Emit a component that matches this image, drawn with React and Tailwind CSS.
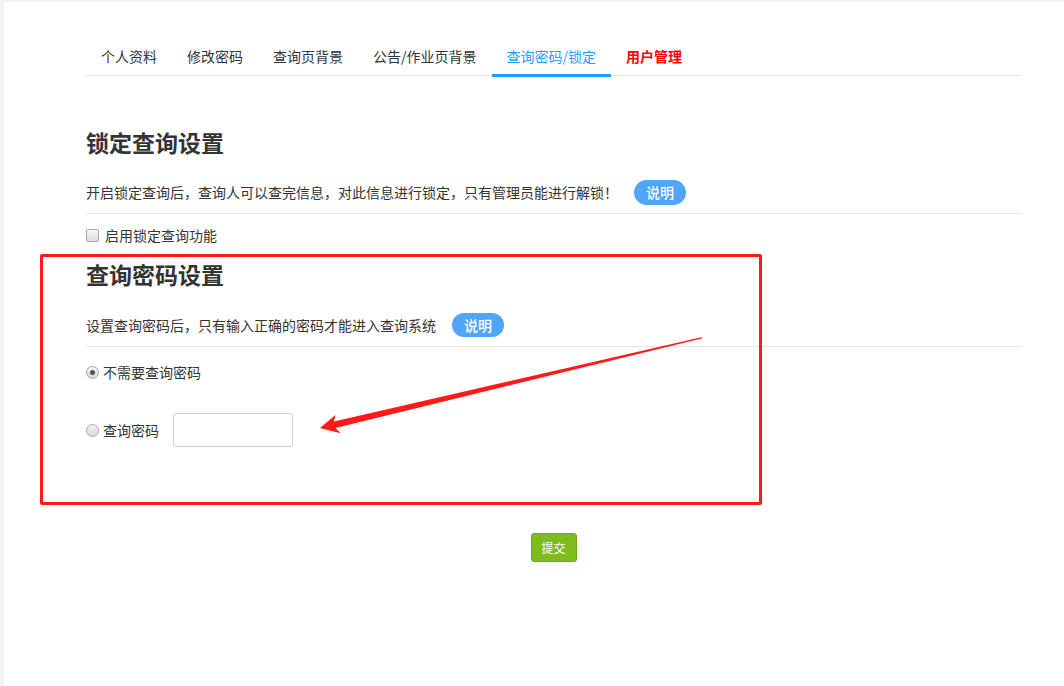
import React from "react";

const tabs = ["个人资料", "修改密码", "查询页背景", "公告/作业页背景", "查询密码/锁定", "用户管理"];

const Radio = ({ checked }) => (
  <span className="w-[13px] h-[13px] rounded-full border border-[#a8a8a8] bg-gradient-to-b from-[#f4f4f4] to-[#d9d9d9] flex items-center justify-center shrink-0">
    {checked ? <span className="w-[5px] h-[5px] rounded-full bg-[#555]" /> : null}
  </span>
);

export default function App() {
  return (
    <div className="relative w-[1064px] h-[686px] bg-[#f2f2f2] pl-[4px] pt-[2px] overflow-hidden font-['Microsoft_YaHei','Noto_Sans_CJK_SC',sans-serif] text-[#333]">
      <div className="w-full h-full bg-white px-[82px] pt-[36px]">
        <div className="w-[935px]">
          {/* tabs */}
          <div className="flex border-b border-[#e6e6e6]">
            {tabs.map((t, i) => (
              <div
                key={t}
                className={`relative px-[15px] h-[37px] leading-[37px] text-[14px] ${
                  i === 4 ? "text-[#1e9fff]" : i === 5 ? "text-[#ff0000] font-bold" : "text-[#333]"
                }`}
              >
                {t}
                {i === 4 ? <span className="absolute left-0 right-0 bottom-[-2px] h-[3px] bg-[#1e9fff]" /> : null}
              </div>
            ))}
          </div>

          {/* lock section */}
          <h2 className="mt-[51px] text-[23px] font-bold leading-[30px]">锁定查询设置</h2>
          <div className="mt-[23px] pb-[8px] flex items-center border-b border-[#e6e6e6] text-[14px]">
            <span>开启锁定查询后，查询人可以查完信息，对此信息进行锁定，只有管理员能进行解锁！</span>
            <span className="ml-[16px] w-[52px] h-[25px] rounded-full bg-[#4fa5f8] text-white text-[14px] font-medium leading-[25px] text-center">说明</span>
          </div>
          <div className="mt-[11px] h-[20px] flex items-center text-[14px]">
            <span className="w-[13px] h-[13px] rounded-[2px] border border-[#a8a8a8] bg-gradient-to-b from-[#f6f6f6] to-[#dedede] shrink-0" />
            <span className="ml-[6px]">启用锁定查询功能</span>
          </div>

          {/* password section */}
          <h2 className="mt-[14px] text-[23px] font-bold leading-[30px]">查询密码设置</h2>
          <div className="mt-[24px] pb-[9px] flex items-center border-b border-[#e6e6e6] text-[14px]">
            <span>设置查询密码后，只有输入正确的密码才能进入查询系统</span>
            <span className="ml-[16px] w-[52px] h-[24px] rounded-full bg-[#4fa5f8] text-white text-[14px] font-medium leading-[24px] text-center">说明</span>
          </div>
          <div className="mt-[15px] h-[20px] flex items-center text-[14px]">
            <Radio checked />
            <span className="ml-[4px]">不需要查询密码</span>
          </div>
          <div className="mt-[31px] flex items-center text-[14px]">
            <Radio />
            <span className="ml-[4px]">查询密码</span>
            <input className="ml-[14px] w-[120px] h-[34px] rounded-[3px] border border-[#cfcfcf] outline-none" />
          </div>

          <div className="mt-[86px] flex justify-center">
            <button className="w-[46px] h-[29px] rounded-[3px] bg-[#7cbd1c] border border-[#6eaa16] text-white text-[12px]">提交</button>
          </div>
        </div>
      </div>

      {/* annotation overlay */}
      <div className="absolute left-[40px] top-[254px] w-[722px] h-[251px] border-[3px] border-[#ff1a1a] rounded-[2px] pointer-events-none" />
      <svg className="absolute left-0 top-0 pointer-events-none" width="1064" height="686">
        <g transform="translate(320,428) rotate(-13.3)">
          <polygon points="0,0 18,-9 15,-3.2 392,-0.6 393,0.6 15,3.6 19,10" fill="#ff1a1a" />
        </g>
      </svg>
    </div>
  );
}
